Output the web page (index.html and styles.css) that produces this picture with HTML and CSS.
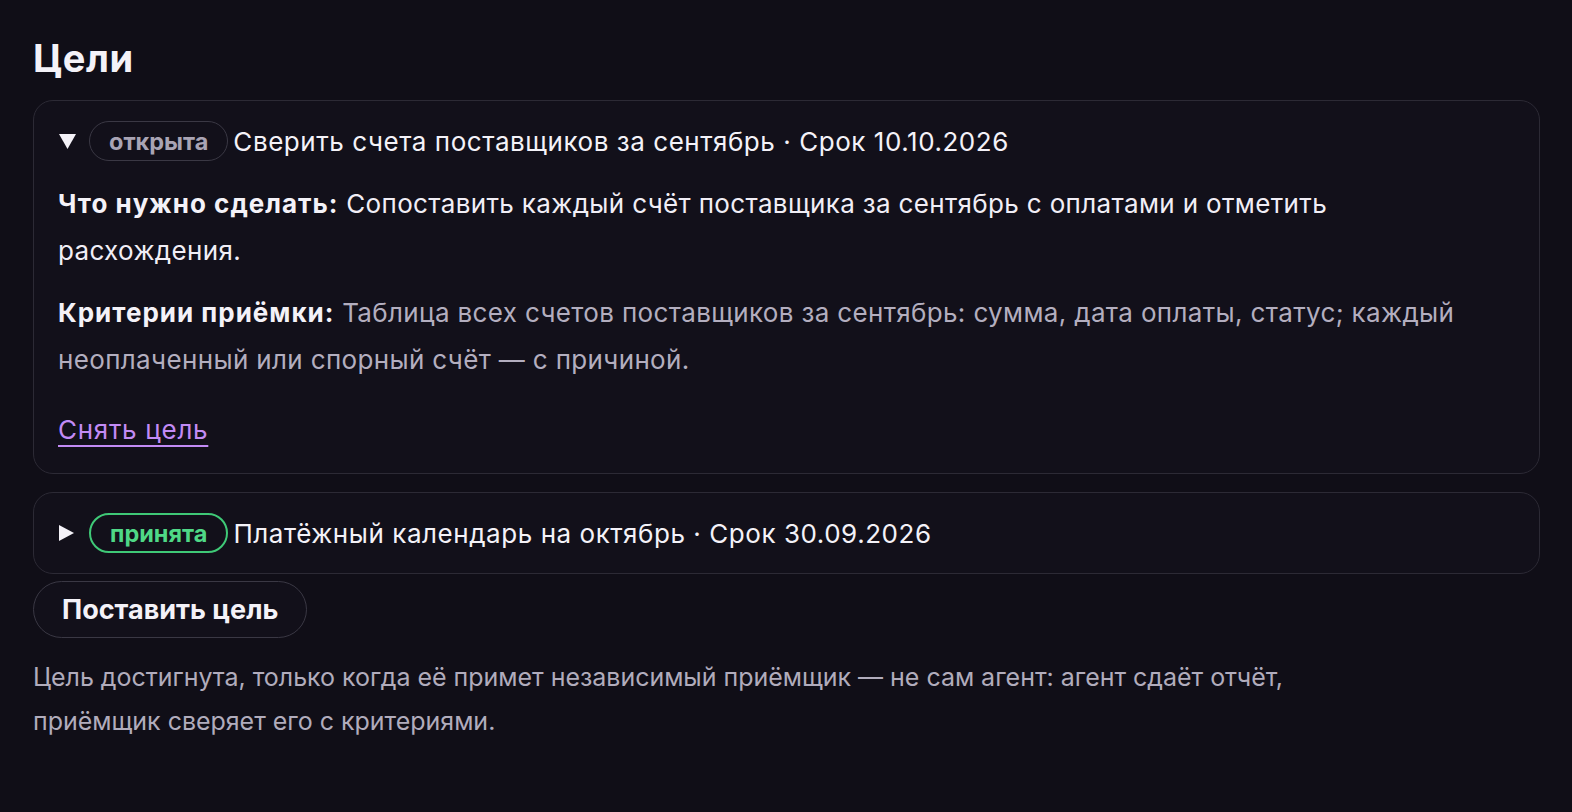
FILE: index.html
```html
<!DOCTYPE html>
<html lang="ru">
<head>
<meta charset="utf-8">
<title>Цели</title>
<link rel="stylesheet" href="styles.css">
</head>
<body>
<main class="page">
  <h1 class="title">Цели</h1>

  <details class="goal" open>
    <summary class="goal-head">
      <svg class="caret" width="17" height="15" viewBox="0 0 17 15"><polygon points="0,0 17,0 8.5,15" fill="#f4f2f8"/></svg>
      <span class="pill pill-open">открыта</span>
      <span class="goal-title">Сверить счета поставщиков за сентябрь · Срок 10.10.2026</span>
    </summary>
    <div class="goal-body">
      <p class="para"><b class="label">Что нужно сделать:</b> Сопоставить каждый счёт поставщика за сентябрь с оплатами и отметить расхождения.</p>
      <p class="para muted"><b class="label">Критерии приёмки:</b> Таблица всех счетов поставщиков за сентябрь: сумма, дата оплаты, статус; каждый неоплаченный или спорный счёт — с причиной.</p>
      <a class="link" href="#">Снять цель</a>
    </div>
  </details>

  <details class="goal">
    <summary class="goal-head">
      <svg class="caret caret-right" width="15" height="16" viewBox="0 0 15 16"><polygon points="0,0 15,8 0,16" fill="#f4f2f8"/></svg>
      <span class="pill pill-done">принята</span>
      <span class="goal-title">Платёжный календарь на октябрь · Срок 30.09.2026</span>
    </summary>
  </details>

  <button class="btn" type="button">Поставить цель</button>

  <p class="note">Цель достигнута, только когда её примет независимый приёмщик — не сам агент: агент сдаёт отчёт,<br>приёмщик сверяет его с критериями.</p>
</main>
</body>
</html>
```

FILE: styles.css
```css
html, body {
  margin: 0;
  padding: 0;
  background: #100e17;
}
body {
  font-family: Inter, "Noto Sans", "Liberation Sans", sans-serif;
  color: #f4f2f8;
}
.page {
  padding: 33px 32px 40px 33px;
  display: flex;
  flex-direction: column;
}
.title {
  font-size: 38px;
  font-weight: 700;
  letter-spacing: 0.6px;
  line-height: 50px;
  margin: 0 0 17px 0;
}
.goal {
  border: 1px solid #2c2a35;
  border-radius: 20px;
  background: #12101a;
  padding: 20px 36px 20px 24px;
  margin-bottom: 18px;
}
.goal + .btn { margin-top: -11px; }
.goal-head {
  list-style: none;
  display: flex;
  align-items: center;
  cursor: pointer;
  height: 40px;
}
.goal-head::-webkit-details-marker { display: none; }
.caret {
  flex: none;
  margin: 0 13px 0 1px;
}
.caret-right { margin-right: 15px; }
.pill {
  box-sizing: border-box;
  height: 40px;
  padding: 0 19px;
  border-radius: 20px;
  display: inline-flex;
  align-items: center;
  font-size: 23.5px;
  font-weight: 700;
  margin-right: 5px;
}
.pill-open {
  border: 1.5px solid #3a3844;
  color: #a9a4b4;
}
.pill-done {
  border: 2px solid #3fc977;
  color: #4fd886;
}
.goal-title {
  font-size: 26px;
  letter-spacing: 0.55px;
  color: #f4f2f8;
}
.goal-body {
  padding-top: 19px;
}
.para {
  margin: 0 0 15px 0;
  font-size: 26px;
  line-height: 47px;
  letter-spacing: 0.35px;
  color: #f1eef6;
}
.para.muted { color: #b3aebf; }
.label {
  font-weight: 700;
  letter-spacing: 1px;
  color: #f4f2f8;
}
.link {
  display: inline-block;
  margin-top: 13px;
  font-size: 26px;
  line-height: 38px;
  letter-spacing: 0.7px;
  color: #c28bf5;
  text-decoration: underline;
  text-underline-offset: 6px;
  text-decoration-thickness: 2px;
  margin-bottom: 4px;
}
.btn {
  align-self: flex-start;
  height: 57px;
  padding: 0 28px;
  border-radius: 29px;
  border: 1.5px solid #3a3844;
  background: #12101a;
  color: #f4f2f8;
  font-family: inherit;
  font-size: 27px;
  font-weight: 700;
  cursor: pointer;
}
.note {
  margin: 17px 0 0 0;
  font-size: 25px;
  line-height: 44px;
  color: #b1acbc;
  letter-spacing: -0.03px;
}
```
